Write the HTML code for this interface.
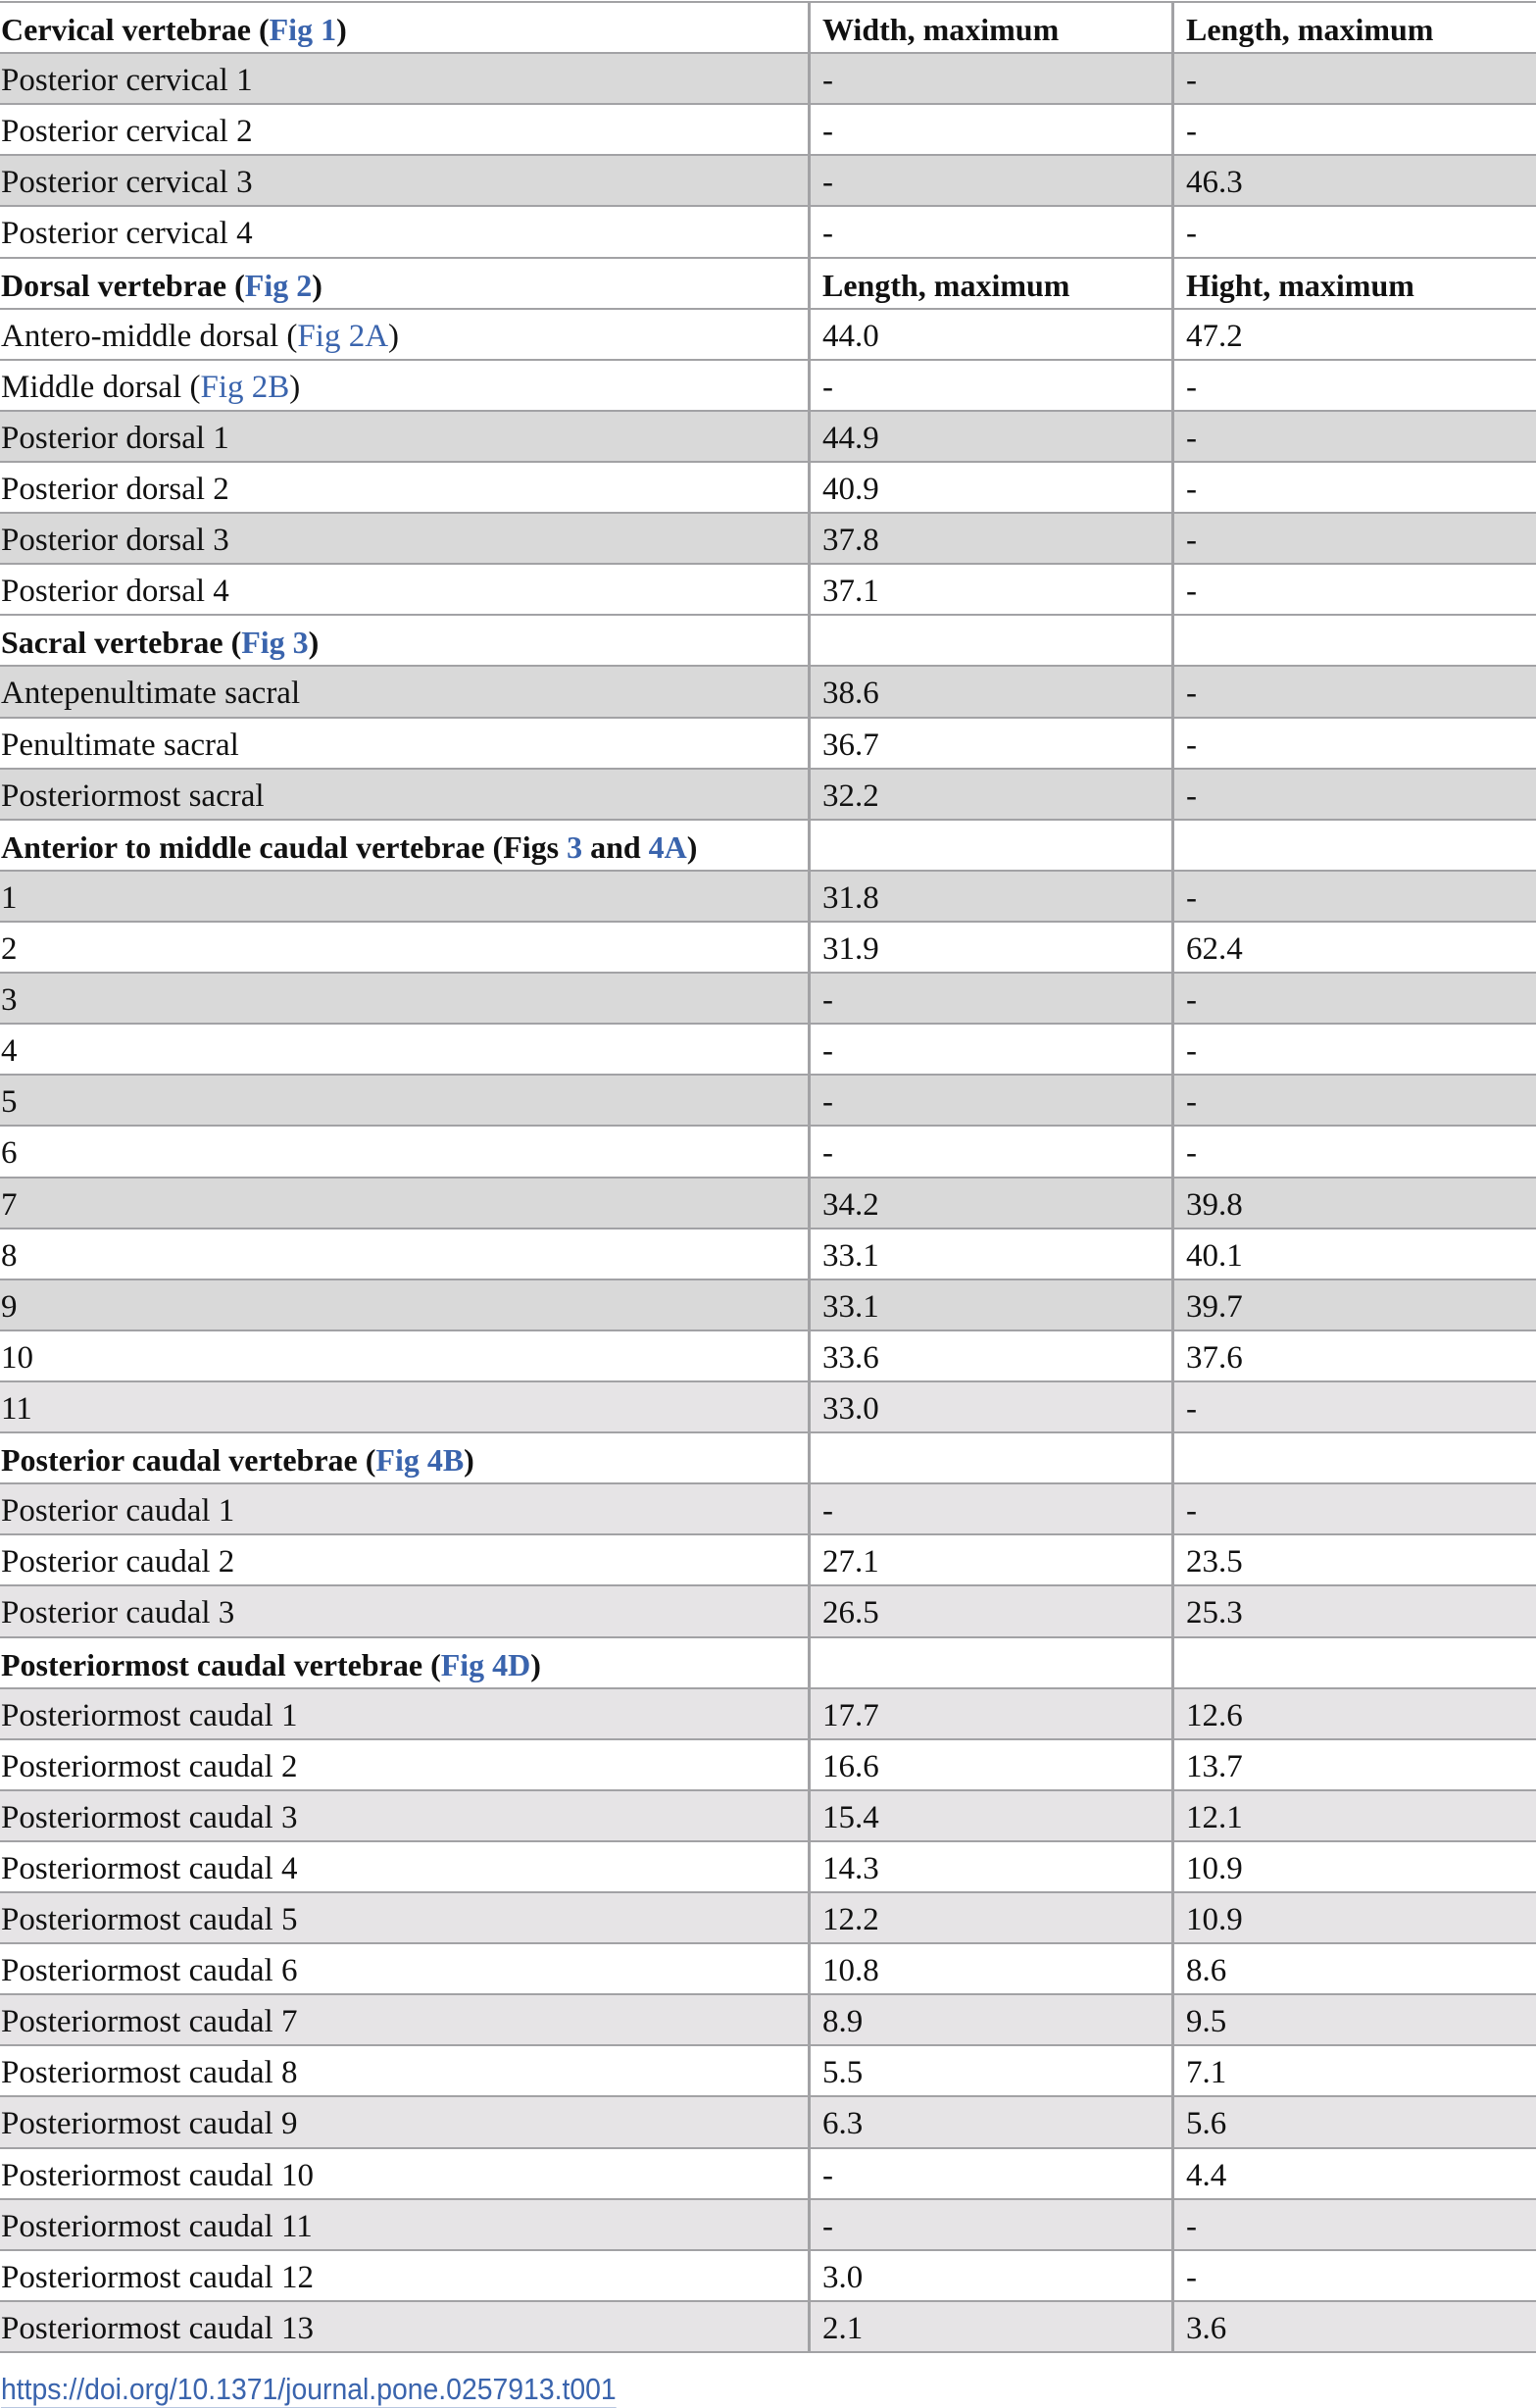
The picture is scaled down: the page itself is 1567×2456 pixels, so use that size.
<!DOCTYPE html>
<html><head><meta charset="utf-8"><style>
body{margin:0;background:#fff;width:1567px;height:2454px;overflow:hidden;font-family:"Liberation Serif",serif;color:#111;}
#t{position:absolute;left:0;top:1px;width:1567px;border-top:2px solid #a2a2a5;}
.r{height:50.12px;border-bottom:2px solid #a2a2a5;display:flex;font-size:33px;line-height:54px;white-space:nowrap;}
.r div{overflow:hidden}
.a{width:823px;padding-left:1px;}
.b{width:356px;border-left:3px solid #a2a2a5;padding-left:12px;}
.c{flex:1;border-left:3px solid #a2a2a5;padding-left:12px;}
.g{background:#d9d9d9}
.l{background:#e6e4e6}
.h{font-weight:bold;font-size:32px}
a{color:#3a64ad;text-decoration:none}
#doi{position:absolute;left:1px;top:2419px;font-family:"Liberation Sans",sans-serif;font-size:31px;color:#3a64ad;transform:scaleX(0.915);transform-origin:left top;border-bottom:1px solid #b8c6e0;line-height:36px;}
</style></head><body>
<div id="t">
<div class="r h"><div class="a">Cervical vertebrae (<a>Fig 1</a>)</div><div class="b">Width, maximum</div><div class="c">Length, maximum</div></div>
<div class="r g"><div class="a">Posterior cervical 1</div><div class="b">-</div><div class="c">-</div></div>
<div class="r"><div class="a">Posterior cervical 2</div><div class="b">-</div><div class="c">-</div></div>
<div class="r g"><div class="a">Posterior cervical 3</div><div class="b">-</div><div class="c">46.3</div></div>
<div class="r"><div class="a">Posterior cervical 4</div><div class="b">-</div><div class="c">-</div></div>
<div class="r h"><div class="a">Dorsal vertebrae (<a>Fig 2</a>)</div><div class="b">Length, maximum</div><div class="c">Hight, maximum</div></div>
<div class="r"><div class="a">Antero-middle dorsal (<a>Fig 2A</a>)</div><div class="b">44.0</div><div class="c">47.2</div></div>
<div class="r"><div class="a">Middle dorsal (<a>Fig 2B</a>)</div><div class="b">-</div><div class="c">-</div></div>
<div class="r g"><div class="a">Posterior dorsal 1</div><div class="b">44.9</div><div class="c">-</div></div>
<div class="r"><div class="a">Posterior dorsal 2</div><div class="b">40.9</div><div class="c">-</div></div>
<div class="r g"><div class="a">Posterior dorsal 3</div><div class="b">37.8</div><div class="c">-</div></div>
<div class="r"><div class="a">Posterior dorsal 4</div><div class="b">37.1</div><div class="c">-</div></div>
<div class="r h"><div class="a">Sacral vertebrae (<a>Fig 3</a>)</div><div class="b"></div><div class="c"></div></div>
<div class="r g"><div class="a">Antepenultimate sacral</div><div class="b">38.6</div><div class="c">-</div></div>
<div class="r"><div class="a">Penultimate sacral</div><div class="b">36.7</div><div class="c">-</div></div>
<div class="r g"><div class="a">Posteriormost sacral</div><div class="b">32.2</div><div class="c">-</div></div>
<div class="r h"><div class="a">Anterior to middle caudal vertebrae (Figs <a>3</a> and <a>4A</a>)</div><div class="b"></div><div class="c"></div></div>
<div class="r g"><div class="a">1</div><div class="b">31.8</div><div class="c">-</div></div>
<div class="r"><div class="a">2</div><div class="b">31.9</div><div class="c">62.4</div></div>
<div class="r g"><div class="a">3</div><div class="b">-</div><div class="c">-</div></div>
<div class="r"><div class="a">4</div><div class="b">-</div><div class="c">-</div></div>
<div class="r g"><div class="a">5</div><div class="b">-</div><div class="c">-</div></div>
<div class="r"><div class="a">6</div><div class="b">-</div><div class="c">-</div></div>
<div class="r g"><div class="a">7</div><div class="b">34.2</div><div class="c">39.8</div></div>
<div class="r"><div class="a">8</div><div class="b">33.1</div><div class="c">40.1</div></div>
<div class="r g"><div class="a">9</div><div class="b">33.1</div><div class="c">39.7</div></div>
<div class="r"><div class="a">10</div><div class="b">33.6</div><div class="c">37.6</div></div>
<div class="r l"><div class="a">11</div><div class="b">33.0</div><div class="c">-</div></div>
<div class="r h"><div class="a">Posterior caudal vertebrae (<a>Fig 4B</a>)</div><div class="b"></div><div class="c"></div></div>
<div class="r l"><div class="a">Posterior caudal 1</div><div class="b">-</div><div class="c">-</div></div>
<div class="r"><div class="a">Posterior caudal 2</div><div class="b">27.1</div><div class="c">23.5</div></div>
<div class="r l"><div class="a">Posterior caudal 3</div><div class="b">26.5</div><div class="c">25.3</div></div>
<div class="r h"><div class="a">Posteriormost caudal vertebrae (<a>Fig 4D</a>)</div><div class="b"></div><div class="c"></div></div>
<div class="r l"><div class="a">Posteriormost caudal 1</div><div class="b">17.7</div><div class="c">12.6</div></div>
<div class="r"><div class="a">Posteriormost caudal 2</div><div class="b">16.6</div><div class="c">13.7</div></div>
<div class="r l"><div class="a">Posteriormost caudal 3</div><div class="b">15.4</div><div class="c">12.1</div></div>
<div class="r"><div class="a">Posteriormost caudal 4</div><div class="b">14.3</div><div class="c">10.9</div></div>
<div class="r l"><div class="a">Posteriormost caudal 5</div><div class="b">12.2</div><div class="c">10.9</div></div>
<div class="r"><div class="a">Posteriormost caudal 6</div><div class="b">10.8</div><div class="c">8.6</div></div>
<div class="r l"><div class="a">Posteriormost caudal 7</div><div class="b">8.9</div><div class="c">9.5</div></div>
<div class="r"><div class="a">Posteriormost caudal 8</div><div class="b">5.5</div><div class="c">7.1</div></div>
<div class="r l"><div class="a">Posteriormost caudal 9</div><div class="b">6.3</div><div class="c">5.6</div></div>
<div class="r"><div class="a">Posteriormost caudal 10</div><div class="b">-</div><div class="c">4.4</div></div>
<div class="r l"><div class="a">Posteriormost caudal 11</div><div class="b">-</div><div class="c">-</div></div>
<div class="r"><div class="a">Posteriormost caudal 12</div><div class="b">3.0</div><div class="c">-</div></div>
<div class="r l"><div class="a">Posteriormost caudal 13</div><div class="b">2.1</div><div class="c">3.6</div></div>
</div>
<div id="doi">https://doi.org/10.1371/journal.pone.0257913.t001</div>
</body></html>
